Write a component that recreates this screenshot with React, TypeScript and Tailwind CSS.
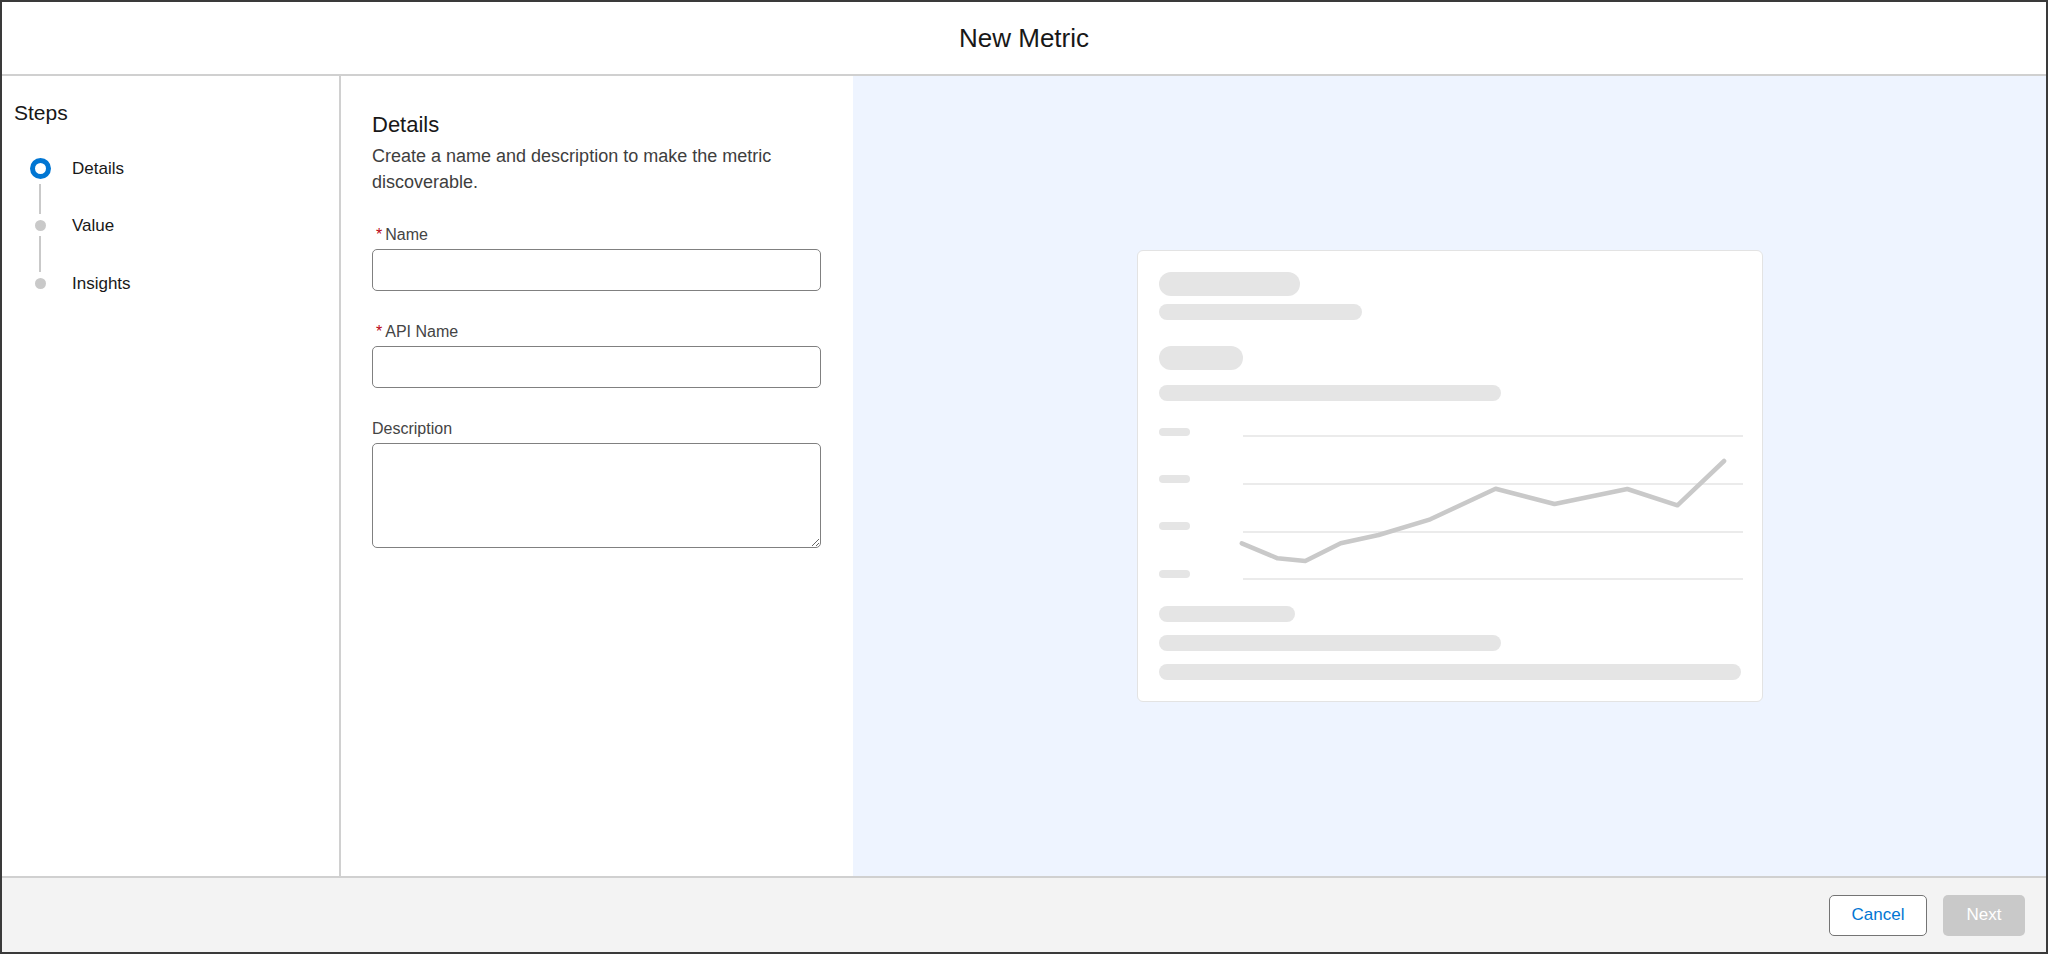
const font = { fontFamily: '"Liberation Sans", Arial, sans-serif' };

const steps = [
  { label: 'Details', current: true },
  { label: 'Value', current: false },
  { label: 'Insights', current: false },
];

const chartPoints =
  '82.8,123.3 118.6,138.3 146.3,141 181.7,123.3 219.6,115 271.3,99.3 336.6,68.7 395.5,84 468.3,69 518.4,85.3 565.1,41';

const StepList = () => {
  return (
    <div className="mt-[31px] flex flex-col pl-[15.5px]">
      {/* current step */}
      <div className="flex h-[21px] items-center">
        <div className="h-[21px] w-[21px] rounded-full border-[5.5px] border-[#0176d3] bg-white" />
        <span className="ml-[21.5px] text-[17px] leading-[21px] text-[#181818]">{steps[0].label}</span>
      </div>
      <div className="ml-[9.5px] mt-[5px] h-[30px] w-[2px] bg-[#c9c9c9]" />
      <div className="mt-[6px] flex h-[11px] items-center">
        <div className="ml-[5px] h-[11px] w-[11px] rounded-full bg-[#c9c9c9]" />
        <span className="ml-[26.5px] text-[17px] leading-[21px] text-[#181818]">{steps[1].label}</span>
      </div>
      <div className="ml-[9.5px] mt-[5px] h-[36px] w-[2px] bg-[#c9c9c9]" />
      <div className="mt-[6px] flex h-[11px] items-center">
        <div className="ml-[5px] h-[11px] w-[11px] rounded-full bg-[#c9c9c9]" />
        <span className="ml-[26.5px] text-[17px] leading-[21px] text-[#181818]">{steps[2].label}</span>
      </div>
    </div>
  );
};

interface FieldProps {
  label: string;
  required?: boolean;
  multiline?: boolean;
}

const Field = ({ label, required, multiline }: FieldProps) => {
  return (
    <div className="flex flex-col">
      <label className="flex h-[20px] items-center text-[16px] leading-[20px] text-[#444444]">
        {required && <span className="ml-[4px] mr-[3px] text-[#ba0517]">*</span>}
        {label}
      </label>
      {multiline ? (
        <textarea className="mt-[4px] h-[105px] w-full rounded-[5px] border border-[#808080] bg-white outline-none" />
      ) : (
        <input className="mt-[4px] h-[42px] w-full rounded-[5px] border border-[#808080] bg-white outline-none" />
      )}
    </div>
  );
};

const PreviewCard = () => {
  return (
    <div className="flex w-[626px] flex-col rounded-[6px] border border-[#e3e3e3] bg-white p-[21px]">
      <div className="h-[24px] w-[141px] rounded-full bg-[#e5e5e5]" />
      <div className="mt-[8px] h-[16px] w-[203px] rounded-full bg-[#e5e5e5]" />
      <div className="mt-[26px] h-[24px] w-[84px] rounded-full bg-[#e5e5e5]" />
      <div className="mt-[15px] h-[16px] w-[342px] rounded-full bg-[#e5e5e5]" />
      <svg className="mt-[19px]" width="584" height="170" viewBox="0 0 584 170">
        {[8, 55, 102, 150].map((y) => (
          <rect key={y} x="0" y={y} width="31" height="8" rx="4" fill="#e5e5e5" />
        ))}
        {[16, 64, 112, 159].map((y) => (
          <line key={y} x1="84" x2="584" y1={y} y2={y} stroke="#e5e5e5" strokeWidth="1.5" />
        ))}
        <polyline
          points={chartPoints}
          fill="none"
          stroke="#c9c9c9"
          strokeWidth="4.5"
          strokeLinejoin="round"
          strokeLinecap="round"
        />
      </svg>
      <div className="mt-[16px] h-[16px] w-[136px] rounded-full bg-[#e5e5e5]" />
      <div className="mt-[13px] h-[16px] w-[342px] rounded-full bg-[#e5e5e5]" />
      <div className="mt-[13px] h-[16px] w-full rounded-full bg-[#e5e5e5]" />
    </div>
  );
};

export default function App() {
  return (
    <div
      className="flex h-[954px] w-[2048px] flex-col overflow-hidden border-2 border-[#3a3a3a] bg-white"
      style={font}
    >
      <header className="flex h-[74px] shrink-0 items-center justify-center border-b-2 border-[#d0d0d0]">
        <h1 className="text-[26px] leading-[32px] text-[#181818]">New Metric</h1>
      </header>

      <div className="flex h-[800px] shrink-0">
        <aside className="w-[339px] shrink-0 border-r-2 border-[#d0d0d0] pl-[12px] pt-[23px]">
          <h2 className="text-[21px] leading-[28px] text-[#181818]">Steps</h2>
          <StepList />
        </aside>

        <section className="w-[512px] shrink-0 pl-[31px] pr-[32px] pt-[35px]">
          <h2 className="text-[22px] leading-[28px] text-[#181818]">Details</h2>
          <p className="mt-[4px] text-[18px] leading-[26px] text-[#3e3e3e]">
            Create a name and description to make the metric discoverable.
          </p>
          <div className="mt-[30px] flex flex-col gap-[31px]">
            <Field label="Name" required />
            <Field label="API Name" required />
            <Field label="Description" multiline />
          </div>
        </section>

        <section className="flex flex-1 items-center justify-center bg-[#eef4ff]">
          <PreviewCard />
        </section>
      </div>

      <footer className="flex flex-1 items-center justify-end gap-[16px] border-t-2 border-[#d0d0d0] bg-[#f3f3f3] pr-[21px]">
        <button className="h-[41px] w-[98px] rounded-[5px] border border-[#747474] bg-white text-[17px] text-[#0176d3]">
          Cancel
        </button>
        <button className="h-[41px] w-[82px] rounded-[5px] bg-[#c9c9c9] text-[17px] text-white">
          Next
        </button>
      </footer>
    </div>
  );
}
